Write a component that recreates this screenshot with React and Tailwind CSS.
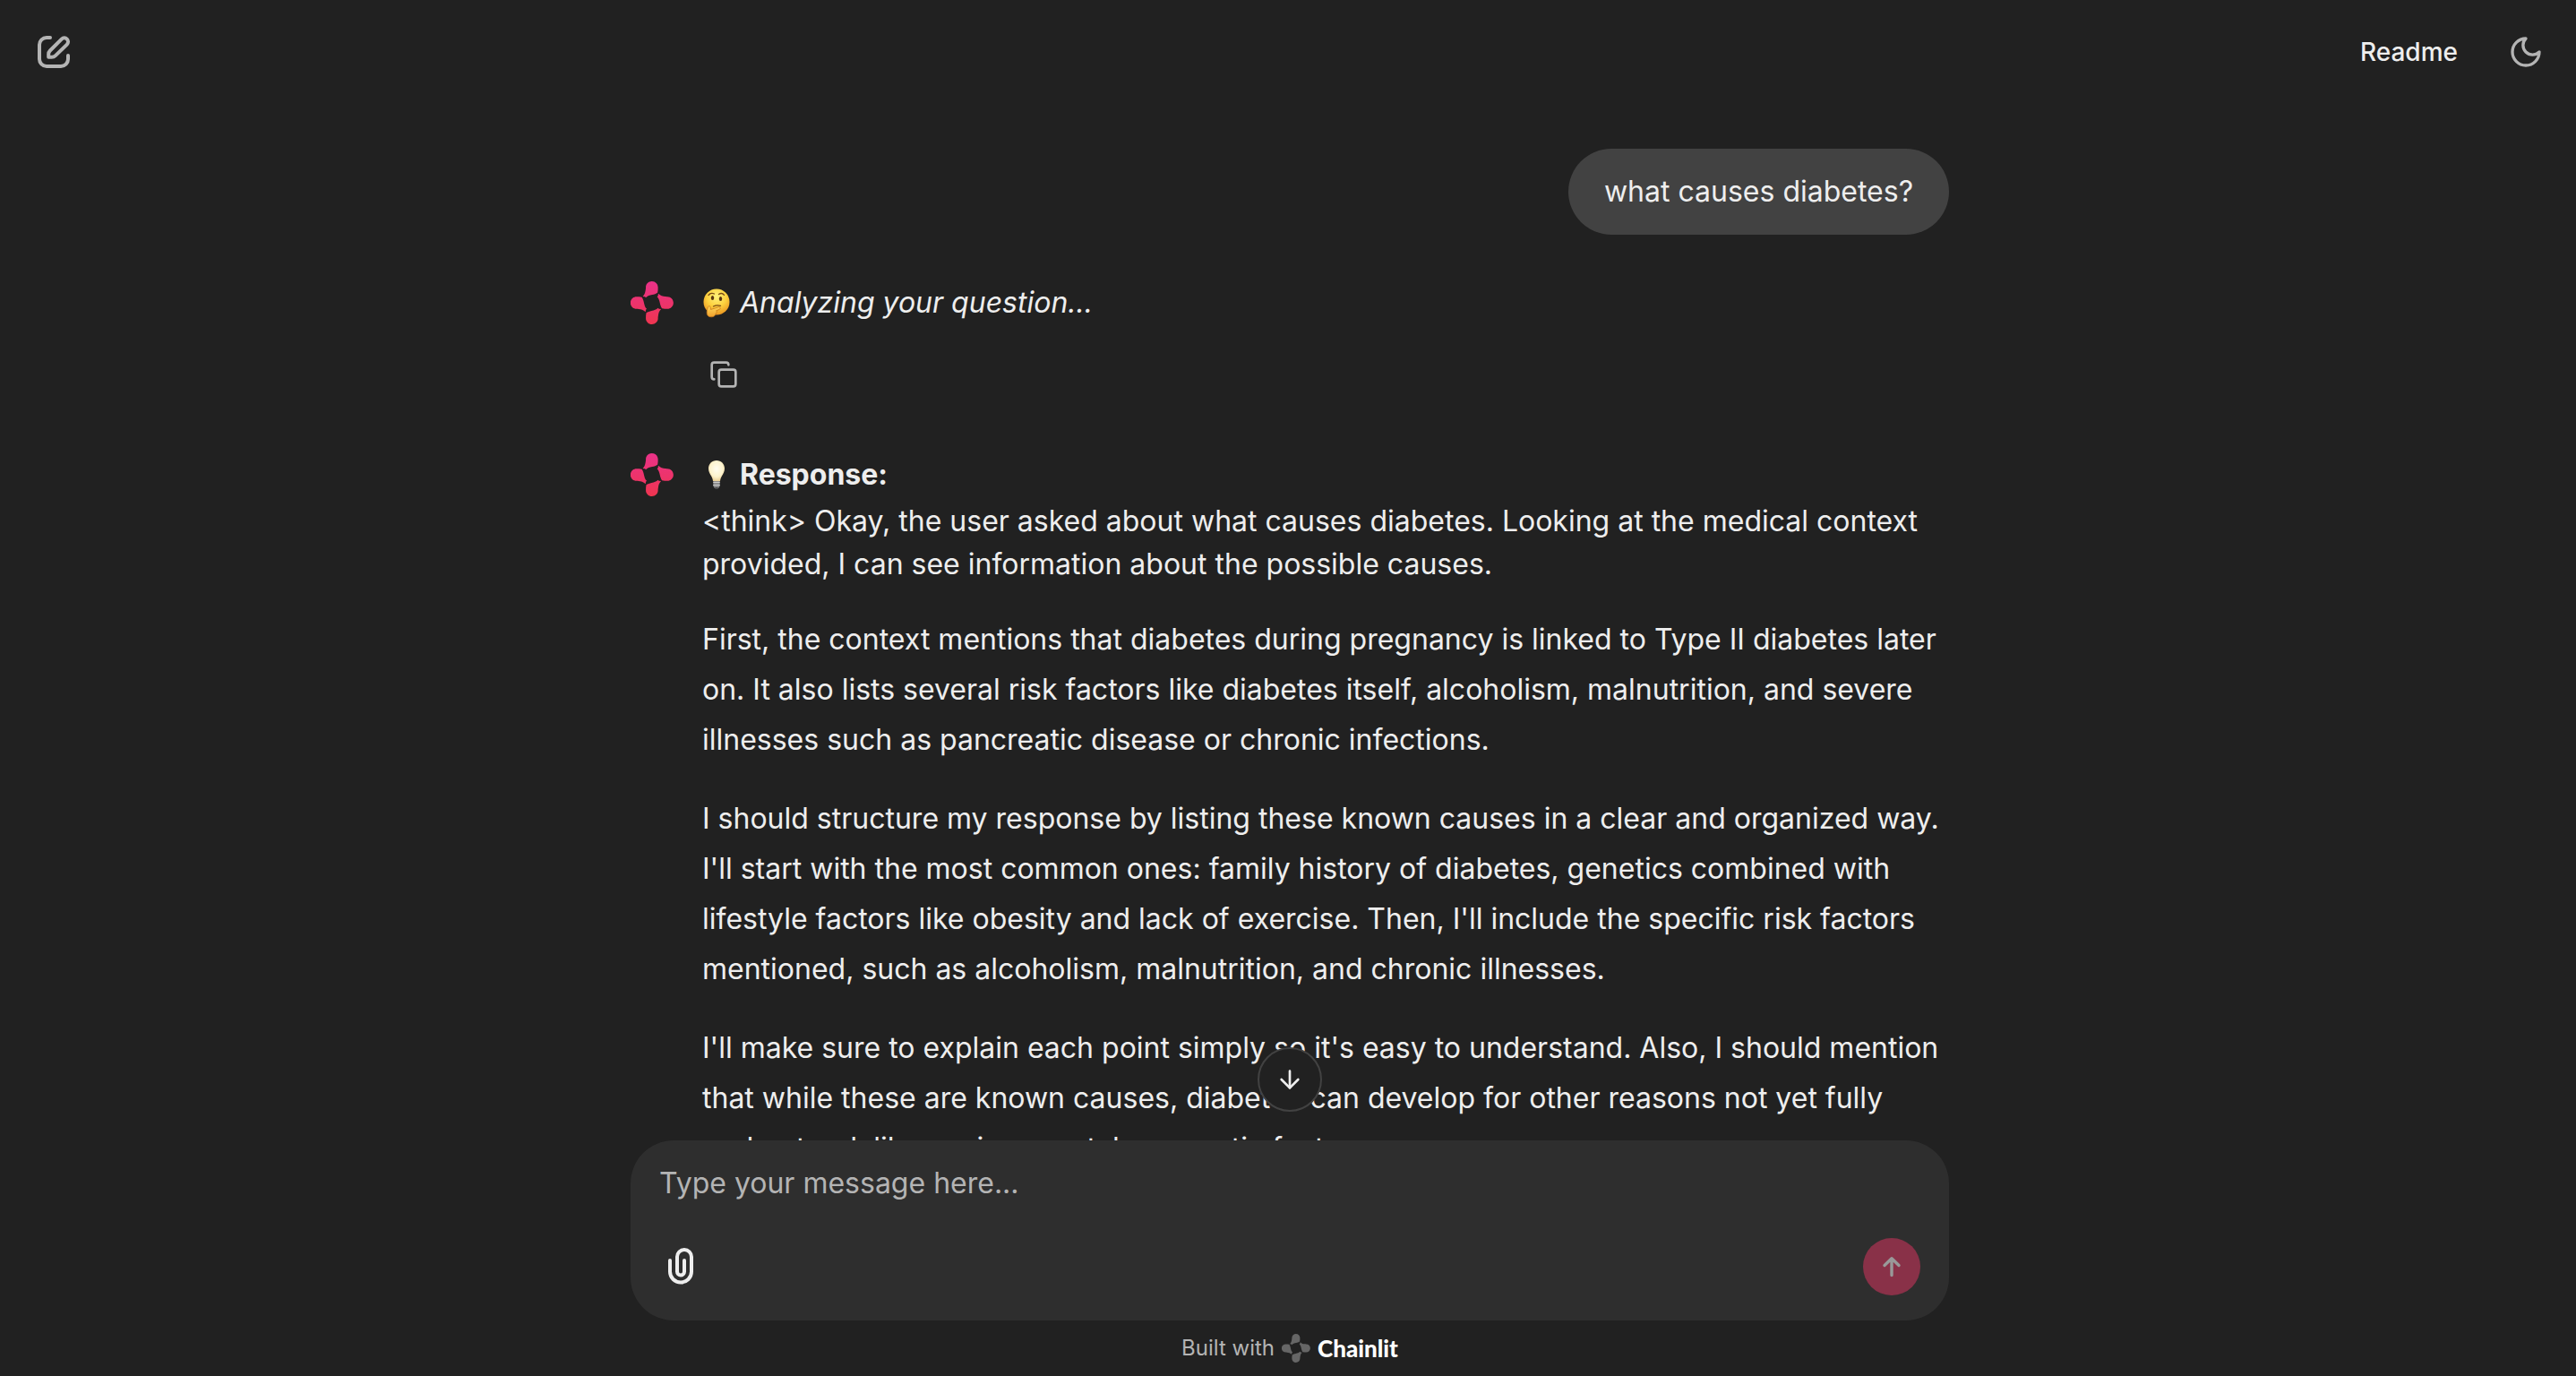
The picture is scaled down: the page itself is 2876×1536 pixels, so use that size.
import React from "react";
import { ArrowDown, Copy } from "lucide-react";

const PETAL =
  "M84 41c11.500 0 20.500 9 20.500 20.500 0 6 0 12-1.500 18-5 3.500-11 5.500-18 7-9 2-16 3.500-21.500 9.500l-3-3-7.500-1c8-8 8.500-15 10-24 .5-3 .5-4 .5-6C63 50 72.500 41 84 41Z";

function Logo({ className, fill, id }) {
  return (
    <svg viewBox="12 41 145 145" className={className} aria-hidden="true">
      <defs>
        <linearGradient id={id} gradientUnits="userSpaceOnUse" x1="84" y1="41" x2="84" y2="186">
          <stop offset="0" stopColor={fill ? fill : "#ea3289"} />
          <stop offset="1" stopColor={fill ? fill : "#ef3550"} />
        </linearGradient>
        <mask id={id + "-shape"} maskUnits="userSpaceOnUse" x="0" y="30" width="170" height="170">
          <g fill="#fff">
            <path d={PETAL} />
            <path d={PETAL} transform="rotate(90 84 113.5)" />
            <path d={PETAL} transform="rotate(180 84 113.5)" />
            <path d={PETAL} transform="rotate(270 84 113.5)" />
          </g>
        </mask>
      </defs>
      <rect x="0" y="30" width="170" height="170" fill={`url(#${id})`} mask={`url(#${id}-shape)`} />
    </svg>
  );
}

function EditIcon() {
  return (
    <svg viewBox="40 38 40 40" className="size-10" fill="none" stroke="currentColor" strokeWidth="4" strokeLinecap="round" strokeLinejoin="round" aria-hidden="true">
      <path d="M56 42h-4a8 8 0 0 0-8 8v16a8 8 0 0 0 8 8h16a8 8 0 0 0 8-8v-4" />
      <path d="M54.200 63.800v-3.200c0-1.600.6-3 1.700-4.100l12.900-12.900a4.200 4.200 0 0 1 6 6L61.900 62.100a5.800 5.800 0 0 1-4.100 1.700Z" />
    </svg>
  );
}

function MoonIcon() {
  return (
    <svg viewBox="0 0 24 24" className="size-10" fill="none" stroke="currentColor" strokeWidth="2" strokeLinecap="round" strokeLinejoin="round" aria-hidden="true">
      <path d="M12 3a6 6 0 0 0 9 9 9 9 0 1 1-9-9Z" />
    </svg>
  );
}

function PaperclipIcon() {
  return (
    <svg viewBox="0 0 48 48" className="size-12" fill="none" stroke="currentColor" strokeWidth="4" strokeLinecap="round" aria-hidden="true">
      <path d="M12 17v12.500a12 12 0 0 0 12 12 12 12 0 0 0 12-12V13a8 8 0 0 0-8-8 8 8 0 0 0-8 8v16.500a4 4 0 0 0 4 4 4 4 0 0 0 4-4V17" />
    </svg>
  );
}

function SendIcon() {
  return (
    <svg viewBox="0 0 32 32" className="size-8" fill="none" stroke="currentColor" strokeWidth="3.400" strokeLinecap="round" strokeLinejoin="round" aria-hidden="true">
      <path d="M16 25.500V6.800M8 14.500l8-7.700 8 7.700" />
    </svg>
  );
}

function ThinkingFace() {
  return (
    <svg viewBox="0 0 32 34" className="h-[34px] w-8" role="img" aria-label="Thinking face">
      <defs>
        <radialGradient id="face" cx="0.5" cy="0.3" r="0.75">
          <stop offset="0" stopColor="#fff27a" />
          <stop offset="0.5" stopColor="#fdd13f" />
          <stop offset="1" stopColor="#e88d1c" />
        </radialGradient>
        <linearGradient id="hand" x1="0" y1="0" x2="0" y2="1">
          <stop offset="0" stopColor="#ffd75a" />
          <stop offset="1" stopColor="#f0a02c" />
        </linearGradient>
      </defs>
      <circle cx="16" cy="16" r="14.500" fill="url(#face)" />
      <ellipse cx="11.500" cy="11.500" rx="1.700" ry="2.500" fill="#5b3510" />
      <ellipse cx="20.500" cy="12.500" rx="1.700" ry="2.500" fill="#5b3510" />
      <path d="M7 8.500c1.500-2 4-2.500 6.500-1.500M18.500 7.500c2-1.500 4.500-1.200 6 .8M12.500 21c2.500-1.200 5-1.500 8-.6" fill="none" stroke="#7a4a14" strokeWidth="1.300" strokeLinecap="round" />
      <path d="M6.500 21.500c1-1.400 2.600-.8 2.700.8l.3 2.200 8.500-2.700c2.200-.6 3 1.900 1 2.700l-3.300 1.300c1.200 1.300.5 2.500-.5 3-.2 2.200-2 4-5 4-3.600 0-5.200-2-5-5.500.1-2.200.5-4.300 1.300-5.800Z" fill="url(#hand)" stroke="#c97a1a" strokeWidth="0.800" />
    </svg>
  );
}

function LightBulb() {
  return (
    <svg viewBox="0 0 32 34" className="h-[34px] w-8" role="img" aria-label="Light bulb">
      <defs>
        <radialGradient id="glass" cx="0.5" cy="0.4" r="0.65">
          <stop offset="0" stopColor="#fffdf0" />
          <stop offset="0.6" stopColor="#fdf3cd" />
          <stop offset="1" stopColor="#e6c888" />
        </radialGradient>
      </defs>
      <path d="M16 1c5.200 0 9 3.900 9 9 0 3.500-1.600 5.800-3 8.200-1.200 2-1.700 3.600-2 5.800h-8c-.3-2.200-.8-3.800-2-5.800-1.400-2.400-3-4.700-3-8.200 0-5.100 3.800-9 9-9Z" fill="url(#glass)" />
      <path d="M12.300 24h7.400v5.500l-1.700 2.500c-1 .8-3 .8-4 0l-1.700-2.500Z" fill="#8e8e8e" />
      <path d="M12.300 25.500h7.400M12.300 28.500h7.400" stroke="#c9c9c9" strokeWidth="1" />
      <path d="M14 31h4l-.8 1.500h-2.400Z" fill="#444" />
    </svg>
  );
}

function AssistantMessage({ id, children }) {
  return (
    <article className="flex gap-8">
      <Logo id={id} className="mt-1 size-12 shrink-0" />
      <div className="min-w-0 flex-1">{children}</div>
    </article>
  );
}

export default function App() {
  return (
    <div className="flex h-screen flex-col overflow-hidden bg-[#212121] font-['Inter',sans-serif] text-[#eeeeee]">
      <header className="flex h-[116px] shrink-0 items-center justify-between pr-9 pl-10">
        <button type="button" aria-label="New chat" className="text-[#b4b4b4]">
          <EditIcon />
        </button>
        <div className="flex items-center gap-14">
          <button type="button" className="text-[28px] leading-10 font-medium">
            Readme
          </button>
          <button type="button" aria-label="Toggle theme" className="text-[#b4b4b4]">
            <MoonIcon />
          </button>
        </div>
      </header>

      <main className="relative min-h-0 flex-1 overflow-hidden pl-1">
        <div className="mx-auto flex max-w-[1472px] flex-col gap-12 pt-[50px] text-[32px] leading-14">
          <div className="self-end rounded-[48px] bg-[#424242] px-10 py-5">what causes diabetes?</div>

          <AssistantMessage id="logo-a">
            <p className="flex items-center gap-2.5">
              <ThinkingFace />
              <em>Analyzing your question...</em>
            </p>
            <div className="mt-4 flex h-18 items-center pl-2">
              <button type="button" aria-label="Copy to clipboard" className="text-[#b4b4b4]">
                <Copy className="size-8" strokeWidth={2} />
              </button>
            </div>
          </AssistantMessage>

          <AssistantMessage id="logo-b">
            <p className="flex items-center gap-2.5">
              <LightBulb />
              <strong className="font-bold">Response:</strong>
            </p>
            <p className="leading-12">
              &lt;think&gt; Okay, the user asked about what causes diabetes. Looking at the medical context
              provided, I can see information about the possible causes.
            </p>
            <p className="mt-8">
              First, the context mentions that diabetes during pregnancy is linked to Type II diabetes later
              on. It also lists several risk factors like diabetes itself, alcoholism, malnutrition, and severe
              illnesses such as pancreatic disease or chronic infections.
            </p>
            <p className="mt-8">
              I should structure my response by listing these known causes in a clear and organized way.
              I'll start with the most common ones: family history of diabetes, genetics combined with
              lifestyle factors like obesity and lack of exercise. Then, I'll include the specific risk factors
              mentioned, such as alcoholism, malnutrition, and chronic illnesses.
            </p>
            <p className="mt-8">
              I'll make sure to explain each point simply so it's easy to understand. Also, I should mention
              that while these are known causes, diabetes can develop for other reasons not yet fully
              understood, like environmental or genetic factors.
            </p>
          </AssistantMessage>
        </div>
        <div className="absolute inset-x-0 bottom-8 flex justify-center pl-1">
          <button
            type="button"
            aria-label="Scroll to bottom"
            className="flex size-18 items-center justify-center rounded-full border-2 border-[#424242] bg-[#212121]"
          >
            <ArrowDown className="size-8" strokeWidth={2} />
          </button>
        </div>
      </main>

      <div className="shrink-0 pl-1">
        <form className="mx-auto flex max-w-[1472px] flex-col gap-[33px] rounded-[48px] bg-[#2e2e2e] px-8 pt-5 pb-7">
          <textarea
            rows={1}
            aria-label="Message"
            placeholder="Type your message here..."
            className="block w-full resize-none overflow-hidden bg-transparent text-[32px] leading-14 outline-none placeholder:text-[#b4b4b4]"
          />
          <div className="flex items-center justify-between">
            <button type="button" aria-label="Attach files">
              <PaperclipIcon />
            </button>
            <button
              type="submit"
              disabled
              aria-label="Send message"
              className="flex size-16 items-center justify-center rounded-full bg-[#893148] text-[#999999]"
            >
              <SendIcon />
            </button>
          </div>
        </form>
      </div>

      <footer className="flex h-[62px] shrink-0 justify-center pl-1">
        <a href="#chainlit" className="flex items-center gap-2 text-2xl text-[#b4b4b4]">
          <span>Built with</span>
          <Logo id="logo-footer" fill="#666666" className="size-8" />
          <span className="font-['Lato',sans-serif] text-[26px] font-black text-white">Chainlit</span>
        </a>
      </footer>
    </div>
  );
}
